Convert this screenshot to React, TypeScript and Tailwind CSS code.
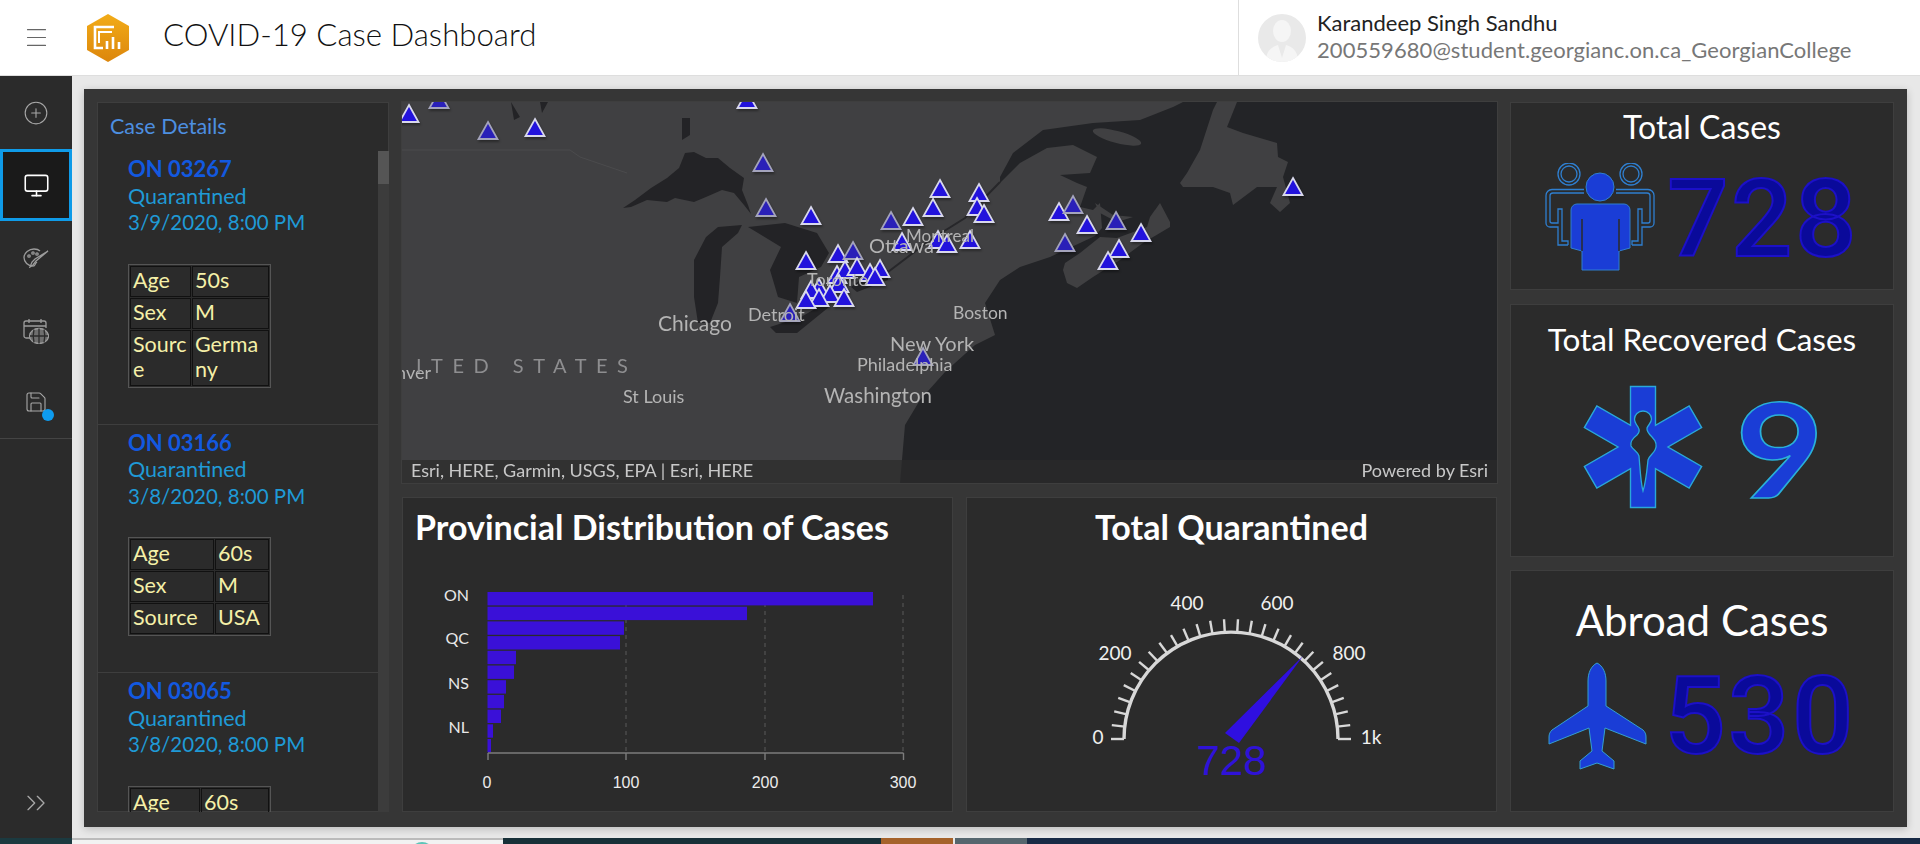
import { ChevronsRight, CirclePlus, Menu, Monitor, Save } from 'lucide-react';

const cases = [
  { id: 'ON 03267', date: '3/9/2020, 8:00 PM', age: '50s', sex: 'M', source: 'Germany', col: 'w-[61px]' },
  { id: 'ON 03166', date: '3/8/2020, 8:00 PM', age: '60s', sex: 'M', source: 'USA', col: 'w-[84px]' },
  { id: 'ON 03065', date: '3/8/2020, 8:00 PM', age: '60s', sex: 'F', source: 'USA', col: 'w-[70px]' },
];

// [x, y, dimmed] in page coordinates, same as the map viewBox
const pins: [number, number, boolean?][] = [
  [409, 114], [439, 100, true], [488, 131, true], [535, 128], [747, 100], [763, 163, true], [766, 208, true],
  [811, 216], [806, 261], [838, 254], [853, 251, true], [891, 221, true], [913, 217], [933, 208], [940, 189],
  [979, 193], [977, 207], [984, 214], [902, 242], [938, 240], [947, 244], [970, 240], [837, 275], [845, 270],
  [857, 267], [870, 273], [880, 269], [875, 277], [819, 288], [839, 284], [811, 290], [830, 294], [819, 298],
  [806, 300], [844, 298], [790, 313, true], [923, 357, true], [1059, 212], [1073, 205, true], [1087, 225],
  [1116, 221, true], [1141, 233], [1065, 243, true], [1119, 249], [1108, 261], [1293, 187],
];

const cities = [
  { name: 'Chicago', x: 658, y: 331, size: 21 },
  { name: 'Detroit', x: 748, y: 321, size: 18 },
  { name: 'Boston', x: 953, y: 319, size: 17.5 },
  { name: 'New York', x: 890, y: 351, size: 20 },
  { name: 'Philadelphia', x: 857, y: 371, size: 18 },
  { name: 'St Louis', x: 623, y: 403, size: 18 },
  { name: 'Washington', x: 824, y: 403, size: 20.5 },
  { name: 'Ottawa', x: 869, y: 253, size: 20 },
  { name: 'Montreal', x: 906, y: 242, size: 17 },
  { name: 'Toronto', x: 807, y: 286, size: 18 },
];

const bars = [873, 747, 624, 620, 516, 514, 506, 504, 501, 493, 491];

const MapArt = () => {
  return (
    <svg viewBox="402 102 1095 381" className="block h-full w-full bg-[#404042]">
      <g className="[filter:blur(0.5px)]">
        <path
          fill="#232427"
          d="M1497 102V483H900L905 425L920 400L945 372L975 345L995 335L985 303L1000 280L1020 267L1050 257L1095 236L1102 228L1100 203L1093 210L1080 207L1087 187L1077 183L1060 175L1090 173L1097 157L1073 145L1047 148L1020 163L1000 183L1000 177L1013 153L1043 130L1093 123L1140 120L1173 107L1183 102Z"
        />
        <g fill="#404042">
          <path d="M1063 270L1067 283L1077 288L1093 277L1120 260L1143 243L1170 227L1170 222L1160 203L1150 217L1147 227L1117 238L1100 237L1080 253L1065 263Z" />
          <path d="M1180 183L1187 173L1200 150L1213 110L1217 102H1237L1227 127L1243 133L1277 143L1278 157L1288 162L1283 177L1290 203L1280 212L1270 203L1277 187L1257 187L1233 205L1230 193L1213 187L1183 187Z" />
          <path d="M1095 203L1113 215L1133 217L1117 222L1100 213Z" />
          <ellipse cx="1117" cy="137" rx="25" ry="6" transform="rotate(15 1117 137)" />
        </g>
        <g fill="#232326">
          <path d="M623 208L635 200L651 188L667 178L679 168L685 153L694 152L706 158L718 158L730 168L744 178L742 190L748 205L751 214L744 205L734 193L722 190L706 197L694 202L675 198L667 202L647 200L631 207Z" />
          <path d="M694 260L706 237L718 227L742 225L738 233L722 247L720 277L718 303L710 323L698 323L694 297Z" />
          <path d="M748 227L785 223L817 233L829 253L821 267L799 277L797 303L778 297L770 270L781 247L758 233Z" />
          <path d="M770 327L801 317L825 303L829 307L797 333L776 333Z" />
          <path d="M851 287L864 277L888 270L888 280L857 292Z" />
          <path d="M682 118L690 118L690 135L682 140Z" />
          <path d="M511 102L520 117L514 120Z" />
          <path d="M540 102L548 102L542 113Z" />
        </g>
        <path d="M888 272L930 240L965 218L1000 182" fill="none" stroke="#27272a" strokeWidth="2" />
        <path d="M402 150H570L580 157L627 173" fill="none" stroke="#4b4b4d" strokeWidth="1" />
      </g>
      <g className="[filter:drop-shadow(1px_2px_1px_rgba(0,0,0,0.35))]">
        {pins.map(([x, y, dim]) => (
          <polygon
            key={`${x}-${y}`}
            points={`${x},${y - 9} ${x + 9.5},${y + 8} ${x - 9.5},${y + 8}`}
            fill={dim ? '#2a20b8' : '#2212dc'}
            stroke={dim ? '#a4a4bc' : '#d8d8ec'}
            strokeWidth="1.8"
          />
        ))}
      </g>
      <g fill="#b4b4b4" fontFamily="Lato, sans-serif">
        {cities.map((city) => (
          <text key={city.name} x={city.x} y={city.y} fontSize={city.size}>
            {city.name}
          </text>
        ))}
        <text x="431" y="379" fontSize="18" textAnchor="end">
          Denver
        </text>
        <text x="416" y="373" fontSize="20" letterSpacing="9.5" fill="#8e8e90">
          ITED STATES
        </text>
      </g>
    </svg>
  );
};

const BarChart = () => {
  return (
    <svg viewBox="402 547 551 265" className="block h-[265px] w-full">
      {[626, 765, 903].map((x) => (
        <line key={x} x1={x} x2={x} y1="595" y2="753" stroke="#5a5a5a" strokeDasharray="4 4" />
      ))}
      {bars.map((end, i) => (
        <rect key={i} x="487.5" y={592 + i * 14.7} width={end - 487.5} height="13.4" fill="#3a10d8" />
      ))}
      <path d="M488 753H903.5M488 753V760M626 753V760M765 753V760M903.5 753V760" fill="none" stroke="#7c7c7c" strokeWidth="1.4" />
      <g fill="#e8e8e8" fontFamily="Lato, sans-serif" fontSize="16" textAnchor="end">
        <text x="469" y="601">ON</text>
        <text x="469" y="644">QC</text>
        <text x="469" y="689">NS</text>
        <text x="469" y="733">NL</text>
      </g>
      <g fill="#ececec" fontFamily="Liberation Sans, sans-serif" fontSize="16" textAnchor="middle">
        <text x="487" y="788">0</text>
        <text x="626" y="788">100</text>
        <text x="765" y="788">200</text>
        <text x="903" y="788">300</text>
      </g>
    </svg>
  );
};

const Gauge = () => {
  const cx = 1231;
  const cy = 739;
  const ticks = Array.from({ length: 28 }, (_, i) => (Math.PI * i) / 27);
  return (
    <svg viewBox="966 547 531 265" className="block h-[265px] w-full">
      <path d={`M${cx - 107} ${cy}A107 107 0 0 1 ${cx + 107} ${cy}`} fill="none" stroke="#d8d8d8" strokeWidth="3.4" />
      {ticks.map((a, i) => (
        <line
          key={i}
          x1={cx - 107 * Math.cos(a)}
          y1={cy - 107 * Math.sin(a)}
          x2={cx - 120 * Math.cos(a)}
          y2={cy - 120 * Math.sin(a)}
          stroke="#d8d8d8"
          strokeWidth="2.4"
        />
      ))}
      <polygon points="1303,656 1225,733 1239,743" fill="#2f0fe0" />
      <g fill="#f0f0f0" fontFamily="Lato, sans-serif" fontSize="19" textAnchor="middle">
        <text x="1098" y="744">0</text>
        <text x="1115" y="660">200</text>
        <text x="1187" y="610">400</text>
        <text x="1277" y="610">600</text>
        <text x="1349" y="660">800</text>
        <text x="1371" y="744">1k</text>
      </g>
      <text x="1231.5" y="775" fill="#2f12d8" fontFamily="Liberation Sans, sans-serif" fontSize="42" textAnchor="middle">
        728
      </text>
    </svg>
  );
};

const PeopleIcon = () => {
  const side = (
    <g fill="none" stroke="#2f7fd0" strokeWidth="1.3">
      <circle cx="24" cy="11" r="11" />
      <circle cx="24" cy="11" r="8" />
      <path d="M39 26.5H7a6 6 0 0 0-6 6V60a4 4 0 0 0 4 4H13V82H23" />
      <path d="M39 30H8a3 3 0 0 0-3 3V58a2 2 0 0 0 2 2H13V46H17V78H23V82" />
    </g>
  );
  return (
    <svg viewBox="0 0 110 108" className="h-[108px] w-[110px] shrink-0">
      {side}
      <g transform="translate(110 0) scale(-1 1)">{side}</g>
      <circle cx="55" cy="24" r="14" fill="#1a3dd6" stroke="#2f7fd0" />
      <path
        d="M32 41H79a6 6 0 0 1 6 6V85L74 88V107H37V88L26 85V47a6 6 0 0 1 6-6Z"
        fill="#1a3dd6"
        stroke="#2f7fd0"
      />
      <path d="M37 88V56M74 88V56" fill="none" stroke="#2b2b2b" strokeWidth="1.5" />
    </svg>
  );
};

const StarIcon = () => {
  const points: string[] = [];
  for (let i = 0; i < 6; i++) {
    const a = (Math.PI / 3) * i - Math.PI / 2;
    const ux = Math.cos(a);
    const uy = Math.sin(a);
    const tipX = 65 + 60.5 * ux;
    const tipY = 65 + 60.5 * uy;
    points.push(`${tipX + 12.5 * uy},${tipY - 12.5 * ux}`);
    points.push(`${tipX - 12.5 * uy},${tipY + 12.5 * ux}`);
    const m = a + Math.PI / 6;
    points.push(`${65 + 25 * Math.cos(m)},${65 + 25 * Math.sin(m)}`);
  }
  return (
    <svg viewBox="0 0 130 130" className="h-[130px] w-[130px] shrink-0">
      <polygon points={points.join(' ')} fill="#1a3dd6" stroke="#2aa8d8" strokeWidth="1.4" />
      <path
        d="M65 29C70 29 73.500 33 73.500 37C73.500 41 70 43 69 46C68.500 49 71 52 74 55C78 59 79 64 77 68C75 72 71 74 70 78C69 88 68 100 65 109C62.500 100 62 85 61 74C60 70 55 68 53 64C52 60 55 56 59 53C62 50 62 48 60 45C58 42 56.500 40 56.500 37C56.500 33 60 29 65 29Z"
        fill="#2b2b2b"
        stroke="#2aa8d8"
        strokeWidth="1.3"
      />
    </svg>
  );
};

const PlaneIcon = () => {
  return (
    <svg viewBox="-1 -1 99 108" className="h-[108px] w-[99px] shrink-0">
      <path
        d="M48 0C42 3 39 10 39 18V43L3 67C1 69 0 71 0 74V81L40 65L43 88L31 98V106L48 100L65 106V98L53 88L56 65L97 81V74C97 71 96 69 94 67L57 43V18C57 10 54 3 48 0Z"
        fill="#1a3dd6"
        stroke="#35a0d0"
      />
    </svg>
  );
};

const PaletteIcon = () => {
  return (
    <svg viewBox="0 0 26 20" className="h-[20px] w-[26px]" fill="none" stroke="#9c9c9c" strokeWidth="1.3">
      <path d="M14 14c-3 2-1 4-4 4C5 18 1 14 1 9.500 1 5 6 1 11 1c3 0 5 1 6 2" />
      <circle cx="6" cy="8" r="1.200" />
      <circle cx="10" cy="5" r="1.200" />
      <circle cx="14" cy="6" r="1.200" />
      <path d="M25 3L13 13L10 17L7 19L9 14L12 11Z" />
    </svg>
  );
};

const CalendarGlobeIcon = () => {
  return (
    <svg viewBox="0 0 26 26" className="h-[26px] w-[26px]" fill="none" stroke="#9c9c9c" strokeWidth="1.3">
      <path d="M8 20H3a2 2 0 0 1-2-2V5a2 2 0 0 1 2-2h18a2 2 0 0 1 2 2v5M1 8h22M6 1v4M18 1v4" />
      <ellipse cx="16" cy="18" rx="9.500" ry="7.500" fill="#6e6e6e" />
      <path d="M16 10.500v15M7 18h18M11 11.500c-1 4-1 9 0 13M21 11.500c1 4 1 9 0 13" stroke="#2b2b2b" />
    </svg>
  );
};

const Logo = () => {
  return (
    <svg viewBox="0 0 42 48" className="h-[48px] w-[42px]">
      <defs>
        <linearGradient id="logoFill" x1="0" y1="0" x2="0" y2="1">
          <stop offset="0" stopColor="#f2ac18" />
          <stop offset="1" stopColor="#dc860c" />
        </linearGradient>
      </defs>
      <polygon points="21,0 42,12 42,36 21,48 0,36 0,12" fill="url(#logoFill)" />
      <path d="M27 13H8V34H16" fill="none" stroke="#fff" strokeWidth="2.600" />
      <path d="M12 29V18H25" fill="none" stroke="#fff" strokeWidth="2" />
      <path d="M20 27V35M26 23V35M32 28V35" fill="none" stroke="#fff" strokeWidth="2.600" />
    </svg>
  );
};

const Avatar = () => {
  return (
    <svg viewBox="0 0 48 48" className="h-[48px] w-[48px] shrink-0">
      <defs>
        <clipPath id="avatarClip">
          <circle cx="24" cy="24" r="24" />
        </clipPath>
      </defs>
      <circle cx="24" cy="24" r="24" fill="#e9e9e9" />
      <g clipPath="url(#avatarClip)" fill="#f5f5f5">
        <ellipse cx="24" cy="17" rx="9" ry="11" />
        <path d="M8 48C8 36 14 33 20 31L24 44L28 31C34 33 40 36 40 48Z" />
      </g>
    </svg>
  );
};

const CaseRow = ({ label, value, col }: { label: string; value: string; col?: string }) => {
  return (
    <tr>
      <td className={`${col} border border-[#111] pt-[1px] pr-[2px] pb-[3px] pl-[2px] align-top leading-[25px] break-all`}>{label}</td>
      <td className="border border-[#111] pt-[1px] pr-[2px] pb-[3px] pl-[2px] align-top leading-[25px] break-all">{value}</td>
    </tr>
  );
};

const Card = ({ className, children }: { className: string; children: React.ReactNode }) => {
  return <div className={`bg-[#2b2b2b] shadow-[inset_0_0_0_1px_#3e3e3e] ${className}`}>{children}</div>;
};

const bigNumber =
  '[font-family:Roboto,sans-serif] font-medium tracking-[2.500px] text-[108px] leading-[108px] text-[#0a0a9a] [-webkit-text-stroke:2px_#1c10c8]';

export default function App() {
  return (
    <div className="flex h-[844px] w-[1920px] flex-col overflow-hidden bg-[#e8e8e8] [font-family:Lato,sans-serif]">
      <header className="flex h-[76px] shrink-0 items-center border-b border-[#dedede] bg-white">
        <div className="flex w-[72px] justify-center">
          <Menu size={27} strokeWidth={1} color="#666" />
        </div>
        <div className="ml-[15px]">
          <Logo />
        </div>
        <h1 className="-mt-[6px] ml-[34px] text-[31.200px] font-light text-[#111]">COVID-19 Case Dashboard</h1>
        <div className="ml-auto flex h-full w-[682px] items-center gap-[11px] border-l border-[#dedede] pl-[19px]">
          <Avatar />
          <div className="-mt-[4px]">
            <div className="text-[22px] leading-[27px] text-[#222]">Karandeep Singh Sandhu</div>
            <div className="text-[22px] leading-[27px] tracking-[0.060px] text-[#777]">200559680@student.georgianc.on.ca_GeorgianCollege</div>
          </div>
        </div>
      </header>

      <div className="flex h-[762px] shrink-0">
        <nav className="flex w-[72px] shrink-0 flex-col bg-[#2b2b2b] text-[#a8a8a8]">
          <div className="flex h-[73px] items-center justify-center">
            <CirclePlus size={26} strokeWidth={1} />
          </div>
          <div className="flex h-[72px] items-center justify-center border-[3px] border-[#0f9be8] bg-[#1a1a1a] text-white">
            <Monitor size={27} strokeWidth={1.4} />
          </div>
          <div className="flex h-[74px] items-center justify-center">
            <PaletteIcon />
          </div>
          <div className="flex h-[71px] items-center justify-center">
            <CalendarGlobeIcon />
          </div>
          <div className="flex h-[73px] items-center justify-center border-b border-[#444]">
            <div className="relative h-[24px] w-[24px]">
              <Save size={24} strokeWidth={1.1} />
              <span className="absolute -right-[6px] -bottom-[7px] h-[12px] w-[12px] rounded-full bg-[#0e9cf0]" />
            </div>
          </div>
          <div className="mt-auto flex h-[70px] items-center justify-center">
            <ChevronsRight size={32} strokeWidth={1} />
          </div>
        </nav>

        <main className="flex-1 pt-[13px] pr-[13px] pl-[12px]">
          <div className="flex h-[738px] gap-[13px] bg-[#363636] pt-[13px] pr-[12px] pb-[15px] pl-[13px] shadow-[0_2px_8px_rgba(0,0,0,0.2)]">
            <Card className="flex w-[292px] shrink-0 flex-col overflow-hidden">
              <div className="h-[49px] shrink-0 pt-[10px] pl-[13px] text-[21.500px] leading-[28px] text-[#4d8fe0]">Case Details</div>
              <div className="flex min-h-0 flex-1">
                <div className="min-w-0 flex-1 overflow-hidden">
                  {cases.map((item) => (
                    <div key={item.id} className="border-b border-[#3e3e3e] pt-[5px] pr-[4px] pb-[36px] pl-[31px]">
                      <div className="text-[22px] leading-[26.500px] font-bold text-[#1259e0]">{item.id}</div>
                      <div className="text-[21.500px] leading-[26.500px] text-[#1f9ad6]">Quarantined</div>
                      <div className="text-[20.500px] leading-[26.500px] text-[#1f9ad6]">{item.date}</div>
                      <table className="mt-[28px] w-[143px] table-fixed border-separate border-spacing-[1px] border border-[#555] text-[21.500px] text-[#f5f0a8]">
                        <tbody>
                          <CaseRow label="Age" value={item.age} col={item.col} />
                          <CaseRow label="Sex" value={item.sex} />
                          <CaseRow label="Source" value={item.source} />
                        </tbody>
                      </table>
                    </div>
                  ))}
                </div>
                <div className="w-[11px] shrink-0 bg-[#3c3c3c]">
                  <div className="h-[33px] bg-[#555]" />
                </div>
              </div>
            </Card>

            <div className="flex w-[1095px] shrink-0 flex-col gap-[14px]">
              <div className="relative h-[381px] shrink-0 overflow-hidden shadow-[0_0_0_1px_#3e3e3e]">
                <MapArt />
                <div className="absolute inset-x-0 bottom-0 flex h-[23px] items-center justify-between bg-[#2b2b2b]/70 pr-[9px] pb-[2px] pl-[9px] text-[18px] text-[#c8c8c8]">
                  <span>Esri, HERE, Garmin, USGS, EPA | Esri, HERE</span>
                  <span>Powered by Esri</span>
                </div>
              </div>
              <div className="flex h-[315px] gap-[13px]">
                <Card className="w-[551px] shrink-0">
                  <h2 className="h-[50px] pt-[10px] pl-[13px] text-[34px] leading-[40px] font-bold text-white">Provincial Distribution of Cases</h2>
                  <BarChart />
                </Card>
                <Card className="w-[531px] shrink-0">
                  <h2 className="h-[50px] pt-[10px] text-center text-[34px] leading-[40px] font-bold text-white">Total Quarantined</h2>
                  <Gauge />
                </Card>
              </div>
            </div>

            <div className="flex w-[384px] shrink-0 flex-col text-center text-white">
              <Card className="h-[188px] shrink-0">
                <h2 className="pt-[7px] text-[32px] leading-[36px]">Total Cases</h2>
                <div className="mt-[15px] flex items-center justify-center gap-[12px]">
                  <PeopleIcon />
                  <span className={`${bigNumber} mt-[5px]`}>728</span>
                </div>
              </Card>
              <Card className="mt-[14px] h-[253px] shrink-0">
                <h2 className="pt-[17px] text-[31.500px] leading-[36px]">Total Recovered Cases</h2>
                <div className="mt-[25px] flex items-center justify-center gap-[33px] pr-[8px]">
                  <StarIcon />
                  <span className="inline-block scale-x-[1.15] text-[133px] leading-[130px] font-bold text-[#1a3dd6] [-webkit-text-stroke:1.500px_#2ab0d8]">9</span>
                </div>
              </Card>
              <Card className="mt-[13px] h-[242px] shrink-0">
                <h2 className="pt-[28px] text-[42px] leading-[44px]">Abroad Cases</h2>
                <div className="mt-[20px] flex items-center justify-center gap-[17px]">
                  <PlaneIcon />
                  <span className={bigNumber}>530</span>
                </div>
              </Card>
            </div>
          </div>
        </main>
      </div>

      <div className="flex h-[6px] shrink-0 overflow-hidden">
        <div className="w-[72px] bg-[#1b3a40]" />
        <div className="w-[431px] border-t-2 border-[#bbb] bg-[#f2f2f2] pl-[338px]">
          <div className="mt-[2px] h-[24px] w-[24px] rounded-full bg-[#5cc4b8]" />
        </div>
        <div className="w-[378px] bg-[#173038]" />
        <div className="w-[72px] bg-[#a5622a]" />
        <div className="ml-[2px] w-[72px] bg-[#55666e]" />
        <div className="flex-1 bg-[#172a45]" />
      </div>
    </div>
  );
}
